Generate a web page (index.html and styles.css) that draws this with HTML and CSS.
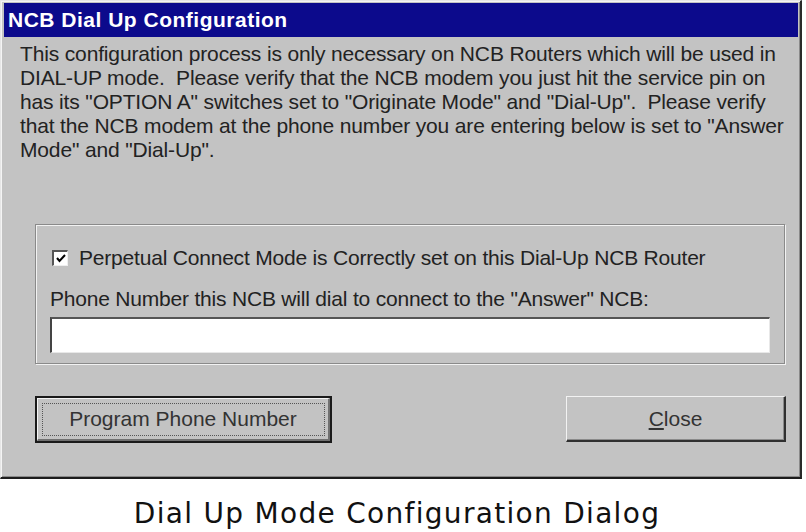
FILE: index.html
```html
<!DOCTYPE html>
<html>
<head>
<meta charset="utf-8">
<link rel="stylesheet" href="styles.css">
</head>
<body>
<div class="dialog">
  <div class="titlebar">NCB Dial Up Configuration</div>
  <div class="content">
    <p class="intro">This configuration process is only necessary on NCB Routers which will be used in DIAL-UP mode.&nbsp; Please verify that the NCB modem you just hit the service pin on has its "OPTION A" switches set to "Originate Mode" and "Dial-Up".&nbsp; Please verify that the NCB modem at the phone number you are entering below is set to "Answer Mode" and "Dial-Up".</p>
    <div class="group">
      <div class="check-row">
        <span class="checkbox">
          <svg width="12" height="12" viewBox="0 0 12 12"><path d="M2 5 L4.5 8 L10 2" fill="none" stroke="#000" stroke-width="2"/></svg>
        </span>
        <span class="check-label">Perpetual Connect Mode is Correctly set on this Dial-Up NCB Router</span>
      </div>
      <div class="field-label">Phone Number this NCB will dial to connect to the "Answer" NCB:</div>
      <div class="input"></div>
    </div>
    <div class="buttons">
      <div class="btn btn-default"><span class="btn-inner">Program Phone Number</span></div>
      <div class="btn btn-close"><span class="btn-inner"><u>C</u>lose</span></div>
    </div>
  </div>
</div>
<div class="caption">Dial Up Mode Configuration Dialog</div>
</body>
</html>
```

FILE: styles.css
```css
html, body {
  margin: 0;
  padding: 0;
  background: #ffffff;
}
body {
  width: 806px;
  height: 532px;
  overflow: hidden;
}
.dialog {
  box-sizing: border-box;
  width: 802px;
  height: 479px;
  background: #c3c3c3;
  border-style: solid;
  border-width: 1px 2px 2px 1px;
  border-color: #e6e6e6 #2a2a2a #1c1c1c #e6e6e6;
  box-shadow: inset 1px 1px 0 #f4f4f4, inset -1px -1px 0 #8a8a8a;
  padding: 2px 2px 2px 3px;
  display: flex;
  flex-direction: column;
}
.titlebar {
  height: 34px;
  background: #0c0a8c;
  color: #ffffff;
  font-family: "Liberation Sans", Arial, sans-serif;
  font-weight: bold;
  font-size: 21px;
  line-height: 34px;
  padding-left: 4px;
  letter-spacing: 0.5px;
}
.content {
  flex: 1;
  display: flex;
  flex-direction: column;
  padding: 5px 10px 0 16px;
  font-family: "Liberation Sans", Arial, sans-serif;
  color: #222;
}
.intro {
  margin: 0;
  font-size: 21px;
  line-height: 24px;
  width: 772px;
  letter-spacing: -0.15px;
}
.group {
  margin: 62px 0 0 15px;
  width: 750px;
  height: 140px;
  box-sizing: border-box;
  border: 1px solid #8a8a8a;
  box-shadow: 1px 1px 0 #f2f2f2, inset 1px 1px 0 #f2f2f2;
  padding: 23px 14px 0 14px;
  display: flex;
  flex-direction: column;
}
.check-row {
  display: flex;
  align-items: center;
  height: 20px;
  gap: 11px;
  padding-left: 2px;
}
.checkbox {
  width: 16px;
  height: 16px;
  box-sizing: border-box;
  background: #ffffff;
  border-style: solid;
  border-width: 2px 1px 1px 2px;
  border-color: #555 #eee #eee #555;
  display: flex;
  align-items: center;
  justify-content: center;
}
.checkbox svg {
  display: block;
}
.check-label {
  font-size: 21px;
  letter-spacing: -0.2px;
}
.field-label {
  margin-top: 19px;
  font-size: 21px;
  line-height: 24px;
  letter-spacing: -0.2px;
}
.input {
  margin-top: 6px;
  width: 720px;
  height: 36px;
  box-sizing: border-box;
  background: #ffffff;
  border-style: solid;
  border-width: 2px 1px 1px 2px;
  border-color: #555 #e8e8e8 #e8e8e8 #444;
}
.buttons {
  display: flex;
  justify-content: space-between;
  margin: 32px 0 0 15px;
  width: 751px;
}
.btn {
  box-sizing: border-box;
  height: 47px;
  display: flex;
  align-items: stretch;
  font-size: 21px;
  color: #333;
}
.btn-inner {
  flex: 1;
  display: flex;
  align-items: center;
  justify-content: center;
}
.btn-default {
  width: 297px;
  border: 2px solid #1a1a1a;
  padding: 0;
}
.btn-default .btn-inner {
  border-style: solid;
  border-width: 1px 2px 2px 1px;
  border-color: #f4f4f4 #707070 #707070 #f4f4f4;
  outline: 1px dotted #555;
  outline-offset: -6px;
}
.btn-close {
  width: 220px;
  height: 46px;
  border-style: solid;
  border-width: 1px 2px 2px 1px;
  border-color: #f2f2f2 #303030 #303030 #f2f2f2;
  box-shadow: inset -1px -1px 0 #8a8a8a;
}
.btn-close u {
  text-underline-offset: 2px;
}
.caption {
  width: 806px;
  text-align: center;
  margin-top: 18px;
  font-family: "DejaVu Sans", Verdana, sans-serif;
  font-size: 28px;
  line-height: 34px;
  letter-spacing: 1.3px;
  color: #111;
  padding-right: 12px;
  box-sizing: border-box;
}
```
